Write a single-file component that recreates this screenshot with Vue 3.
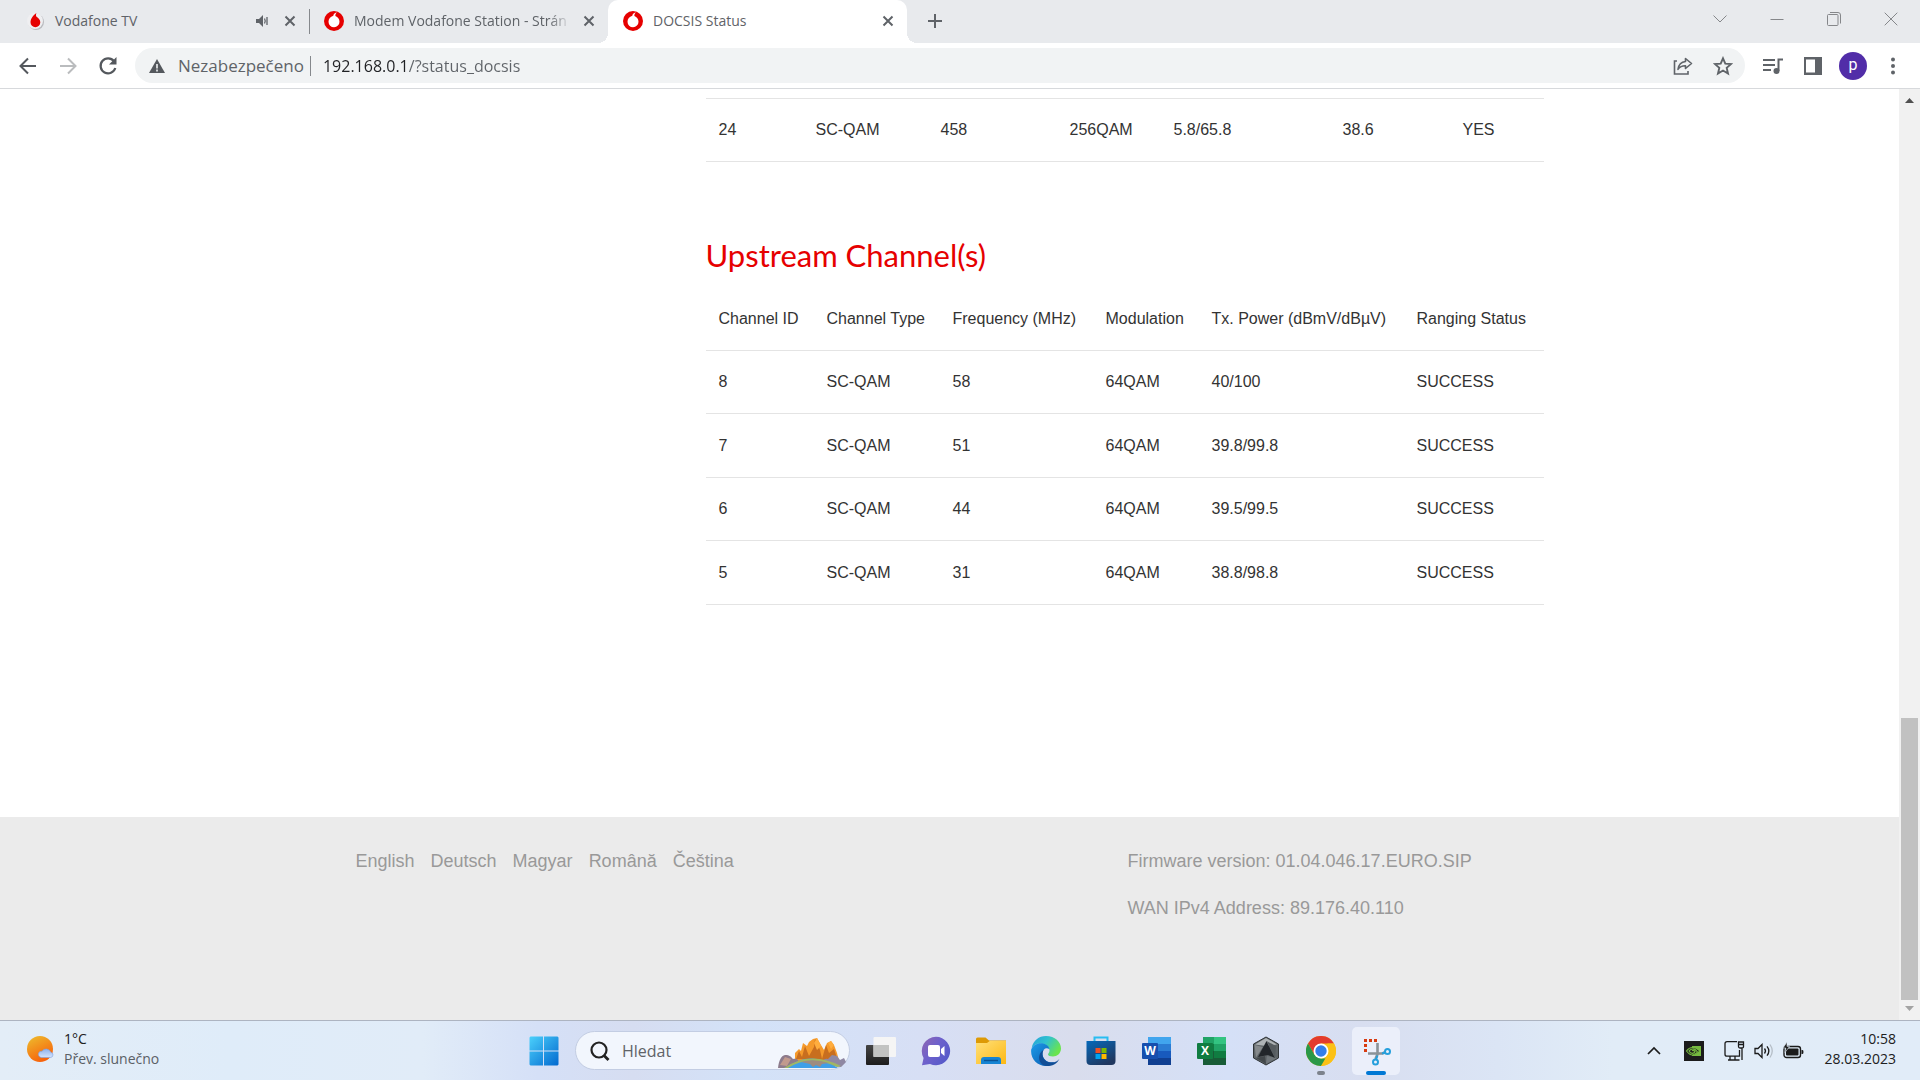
<script setup>
import { ref } from 'vue'

const url = ref('192.168.0.1/?status_docsis')
const query = ref('')

const downstream = [['24', 'SC-QAM', '458', '256QAM', '5.8/65.8', '38.6', 'YES']]
const upstreamHead = ['Channel ID', 'Channel Type', 'Frequency (MHz)', 'Modulation', 'Tx. Power (dBmV/dBµV)', 'Ranging Status']
const upstream = [
  ['8', 'SC-QAM', '58', '64QAM', '40/100', 'SUCCESS'],
  ['7', 'SC-QAM', '51', '64QAM', '39.8/99.8', 'SUCCESS'],
  ['6', 'SC-QAM', '44', '64QAM', '39.5/99.5', 'SUCCESS'],
  ['5', 'SC-QAM', '31', '64QAM', '38.8/98.8', 'SUCCESS'],
]
const languages = ['English', 'Deutsch', 'Magyar', 'Română', 'Čeština']
</script>

<template>
  <div class="screen">
    <header class="tabstrip">
      <div class="tab">
        <svg class="favicon" viewBox="0 0 20 20" aria-hidden="true">
          <circle cx="11" cy="11" r="8" fill="#b9babe" />
          <circle cx="10" cy="10" r="8" fill="#efeff1" />
          <path d="M11.500 2C8.500 4 5.500 7.500 5.500 11.300A4.900 4.900 0 0 0 15.300 11.300C15.300 8.300 12.800 6.800 11.300 5.500C10.700 4.300 11 3 11.500 2Z" fill="#e60000" />
        </svg>
        <span class="tab-title">Vodafone TV</span>
        <button class="mini" aria-label="Ztlumit kartu">
          <svg width="14" height="14" viewBox="0 0 14 14"><path d="M1 5h3l4-4v12L4 9H1z" fill="#5f6368" /><path d="M9.500 4.500q1.500 2.500 0 5M12 3v8" fill="none" stroke="#5f6368" stroke-width="1.300" /></svg>
        </button>
        <button class="mini" aria-label="Zavřít kartu">
          <svg width="12" height="12" viewBox="0 0 12 12"><path d="M1.500 1.500l9 9M10.500 1.500l-9 9" stroke="#5f6368" stroke-width="2" /></svg>
        </button>
      </div>
      <div class="tab second">
        <svg class="favicon" viewBox="0 0 20 20" aria-hidden="true">
          <circle cx="10" cy="10" r="10" fill="#e60000" />
          <path d="M13.500 1.300C10.800 1.700 9.500 3 9.300 4.800C6.300 5.700 4.500 8.200 4.500 10.800A5.500 5.500 0 0 0 15.500 10.700C15.500 7.900 13.900 6 11.400 5C11.200 3.200 12 2 13.500 1.300Z" fill="#fff" />
        </svg>
        <span class="tab-title faded">Modem Vodafone Station - Strán</span>
        <button class="mini" aria-label="Zavřít kartu">
          <svg width="12" height="12" viewBox="0 0 12 12"><path d="M1.500 1.500l9 9M10.500 1.500l-9 9" stroke="#5f6368" stroke-width="2" /></svg>
        </button>
      </div>
      <div class="tab active">
        <svg class="favicon" viewBox="0 0 20 20" aria-hidden="true">
          <circle cx="10" cy="10" r="10" fill="#e60000" />
          <path d="M13.500 1.300C10.800 1.700 9.500 3 9.300 4.800C6.300 5.700 4.500 8.200 4.500 10.800A5.500 5.500 0 0 0 15.500 10.700C15.500 7.900 13.900 6 11.400 5C11.200 3.200 12 2 13.500 1.300Z" fill="#fff" />
        </svg>
        <span class="tab-title">DOCSIS Status</span>
        <button class="mini" aria-label="Zavřít kartu">
          <svg width="12" height="12" viewBox="0 0 12 12"><path d="M1.500 1.500l9 9M10.500 1.500l-9 9" stroke="#5f6368" stroke-width="2" /></svg>
        </button>
      </div>
      <button class="newtab" aria-label="Nová karta">
        <svg width="16" height="16" viewBox="0 0 16 16"><path d="M8 1v14M1 8h14" stroke="#5f6368" stroke-width="2" /></svg>
      </button>
      <div class="window-controls">
        <button aria-label="Hledat na kartách"><svg width="14" height="14" viewBox="0 0 14 14"><path d="M.5 3.500L7 10l6.500-6.500" /></svg></button>
        <button aria-label="Minimalizovat"><svg width="14" height="14" viewBox="0 0 14 14"><path d="M.5 7.500h13" /></svg></button>
        <button aria-label="Obnovit"><svg width="14" height="14" viewBox="0 0 14 14"><rect x=".5" y="2.500" width="10.500" height="11" rx="1" /><path d="M3 .5h8q2.500 0 2.500 2.500v8.500" /></svg></button>
        <button aria-label="Zavřít"><svg width="14" height="14" viewBox="0 0 14 14"><path d="M.7 .7l12.600 12.600M13.300 .7L.7 13.300" /></svg></button>
      </div>
    </header>

    <nav class="toolbar">
      <button class="tool" aria-label="Zpět"><svg width="20" height="20" viewBox="0 0 20 20"><path d="M18 10H3M10 2.500L2.500 10l7.500 7.500" fill="none" stroke="#54585d" stroke-width="2" /></svg></button>
      <button class="tool" aria-label="Vpřed"><svg width="20" height="20" viewBox="0 0 20 20"><path d="M2 10h15M10 2.500l7.500 7.500-7.500 7.500" fill="none" stroke="#babcbe" stroke-width="2" /></svg></button>
      <button class="tool" aria-label="Obnovit stránku"><svg width="20" height="20" viewBox="0 0 20 20"><path d="M16 5.200A7.500 7.500 0 1 0 17.300 12" fill="none" stroke="#54585d" stroke-width="2.200" /><path d="M18.500 1v7.500H11z" fill="#54585d" /></svg></button>
      <div class="address">
        <svg width="16" height="16" viewBox="0 0 16 16" aria-hidden="true"><path d="M8 1l8 14H0z" fill="#54585d" /><path d="M8 6v4.500M8 11.500v2" stroke="#f1f3f4" stroke-width="1.600" /></svg>
        <label class="insecure" for="url">Nezabezpečeno</label>
        <span class="divider"></span>
        <input id="url" v-model="url" class="url" type="text" spellcheck="false" />
        <button class="tool" aria-label="Sdílet"><svg width="20" height="18" viewBox="0 0 20 18" fill="none" stroke="#5f6368" stroke-width="1.600"><path d="M4 4H1.500v13H15v-3" /><path d="M12.500 1.500l6 5-6 5V8.800C9 8.700 6.800 9.800 5 12.300C5.600 8 8 5 12.500 4.500z" stroke-linejoin="round" /></svg></button>
        <button class="tool" aria-label="Přidat do záložek"><svg width="20" height="20" viewBox="0 0 20 20"><path d="M10 2.300l2.300 5.300 5.700.5-4.300 3.800 1.300 5.600-5-3-5 3 1.300-5.600L2 8.100l5.700-.5z" fill="none" stroke="#5f6368" stroke-width="1.900" /></svg></button>
      </div>
      <button class="tool" aria-label="Média"><svg width="20" height="18" viewBox="0 0 20 18"><path d="M0 3h12M0 8h12M0 13h8" stroke="#5f6368" stroke-width="2" /><circle cx="13.500" cy="14" r="3" fill="#5f6368" /><path d="M15.500 14V2.500H20" fill="none" stroke="#5f6368" stroke-width="2" /></svg></button>
      <button class="tool" aria-label="Postranní panel"><svg width="18" height="18" viewBox="0 0 18 18"><rect width="18" height="18" fill="#5f6368" /><rect x="2" y="2.500" width="9" height="13" fill="#fff" /></svg></button>
      <button class="tool" aria-label="Profil"><span class="avatar">p</span></button>
      <button class="tool" aria-label="Nabídka"><svg width="4" height="18" viewBox="0 0 4 18" fill="#5f6368"><circle cx="2" cy="2.500" r="2" /><circle cx="2" cy="9" r="2" /><circle cx="2" cy="15.500" r="2" /></svg></button>
    </nav>

    <div class="viewport">
      <div class="page">
        <main class="content">
          <table class="downstream">
            <colgroup><col class="w97"><col class="w125"><col class="w129"><col class="w104"><col class="w169"><col class="w120"><col></colgroup>
            <tbody>
              <tr v-for="row in downstream" :key="row[0]"><td v-for="(cell, i) in row" :key="i">{{ cell }}</td></tr>
            </tbody>
          </table>
          <h2>Upstream Channel(s)</h2>
          <table>
            <colgroup><col class="w108"><col class="w126"><col class="w153"><col class="w106"><col class="w205"><col></colgroup>
            <thead>
              <tr><th v-for="name in upstreamHead" :key="name" scope="col">{{ name }}</th></tr>
            </thead>
            <tbody>
              <tr v-for="row in upstream" :key="row[0]"><td v-for="(cell, i) in row" :key="i">{{ cell }}</td></tr>
            </tbody>
          </table>
        </main>
        <footer class="footer">
          <div class="footer-inner">
            <nav class="languages"><a v-for="lang in languages" :key="lang" href="#">{{ lang }}</a></nav>
            <div class="versions">
              <p>Firmware version: 01.04.046.17.EURO.SIP</p>
              <p>WAN IPv4 Address: 89.176.40.110</p>
            </div>
          </div>
        </footer>
      </div>
      <div class="scrollbar" aria-hidden="true">
        <svg width="9" height="5" viewBox="0 0 9 5"><path d="M0 5L4.500 0 9 5z" fill="#505050" /></svg>
        <span class="above"></span>
        <span class="thumb"></span>
        <svg width="9" height="5" viewBox="0 0 9 5"><path d="M0 0h9L4.500 5z" fill="#a3a3a3" /></svg>
      </div>
    </div>

    <footer class="taskbar">
      <button class="weather">
        <svg width="28" height="28" viewBox="0 0 28 28" aria-hidden="true">
          <defs>
            <linearGradient id="sun" x1="0" y1="0" x2=".5" y2="1"><stop offset="0" stop-color="#edbf2e" /><stop offset="1" stop-color="#f7630c" /></linearGradient>
            <linearGradient id="cloud" x1="0" y1="0" x2="0" y2="1"><stop offset="0" stop-color="#8fb2ee" /><stop offset="1" stop-color="#d3e3fb" /></linearGradient>
          </defs>
          <circle cx="13" cy="13" r="13" fill="url(#sun)" />
          <path d="M14 21.500a3.200 3.200 0 0 1 0-6.300h1a5 5 0 0 1 8.800 1a2.700 2.700 0 0 1 0 5.300z" fill="url(#cloud)" stroke="#7e9fe0" stroke-width=".6" />
        </svg>
        <span class="weather-text"><span class="temp">1°C</span><span class="sky">Přev. slunečno</span></span>
      </button>

      <div class="apps">
        <button class="app" aria-label="Start">
          <svg width="30" height="30" viewBox="0 0 30 30">
            <defs><linearGradient id="win" x1="0" y1="0" x2="1" y2="1"><stop offset="0" stop-color="#4bd0fb" /><stop offset="1" stop-color="#0269cf" /></linearGradient></defs>
            <path d="M1.500 .5H14v14H.5v-13zM15 .5h13.500l1 1v13H15zM.5 15.500H14v14H1.500l-1-1zM15 15.500h14.500v13l-1 1H15z" fill="url(#win)" />
          </svg>
        </button>
        <div class="search">
          <svg class="lens" width="20" height="20" viewBox="0 0 20 20" fill="none" stroke="#222" stroke-width="2.200"><circle cx="9" cy="9" r="7.500" /><path d="M13.500 14l5 5" stroke-width="2.800" /></svg>
          <input v-model="query" type="text" placeholder="Hledat" aria-label="Hledat" />
          <svg class="scene" width="68" height="32" viewBox="0 0 68 32" aria-hidden="true">
            <path d="M17 24V16l4-4 2 2 2-8 4 3 2-4 4-3 4-1 4 7 3 5 3-7 4-2 3 4 3 8 2 8v5z" fill="#f59a2c" />
            <path d="M18 22l3-8 3 6 3-11 4 10 5-9 1-8 5 11 2 9 4-14 3 8 5-4 3 9-7 2z" fill="#b85f1b" opacity=".75" />
            <path d="M36 6l3-5 4 8-4 4zM50 6l3-2 3 4-3 4z" fill="#ffad3e" />
            <path d="M0 31c1-8 3-12 7-13 5 0 6 2 8 4 3-1 6 0 6 4L9 31z" fill="#8d7b8c" />
            <path d="M2 28l5-8 6 2-4 7z" fill="#c29a8d" />
            <path d="M44 25q2-4 6-3l4-4 5 1 3 4 4-2 2 4-5 5-10-1z" fill="#8f88a3" />
            <path d="M8 31q24-19 52 0z" fill="#3f9fe8" />
            <path d="M6 31Q32 13 63 29l-4 1Q32 17 10 31z" fill="#a0b665" />
            <path d="M23 25q12-4 28 1l-7 1-2 3-4-2-3 2-3-3z" fill="#9e8c80" />
          </svg>
        </div>
        <button class="app" aria-label="Zobrazení úloh">
          <svg width="32" height="30" viewBox="0 0 32 30">
            <defs>
              <linearGradient id="dark" x1="0" y1="0" x2="0" y2="1"><stop offset="0" stop-color="#444" /><stop offset="1" stop-color="#1d1d1d" /></linearGradient>
            </defs>
            <rect x="1" y="9" width="23" height="20" rx="1" fill="url(#dark)" />
            <rect x="8.500" y="1" width="22.500" height="20" rx="1" fill="#f5f5f5" />
            <path d="M8.500 9H24v12H8.500z" fill="#c2c3c2" />
          </svg>
        </button>
        <button class="app" aria-label="Chat">
          <svg width="30" height="30" viewBox="0 0 30 30">
            <defs><linearGradient id="chat" x1="0" y1="0" x2="1" y2=".7"><stop offset="0" stop-color="#9166b1" /><stop offset=".5" stop-color="#6d61cc" /><stop offset="1" stop-color="#5559c9" /></linearGradient></defs>
            <path d="M15 .8a14.200 14.200 0 1 1-6 27.100L1 29.200 2.600 22A14.200 14.200 0 0 1 15 .8z" fill="url(#chat)" />
            <rect x="7" y="9" width="12" height="12" rx="2" fill="#fff" /><path d="M20 13l3.500-3v10L20 17z" fill="#fff" />
          </svg>
        </button>
        <button class="app" aria-label="Průzkumník souborů">
          <svg width="30" height="30" viewBox="0 0 30 30">
            <defs><linearGradient id="folder" x1="0" y1="0" x2="1" y2="1"><stop offset="0" stop-color="#ffe07a" /><stop offset="1" stop-color="#fdb813" /></linearGradient></defs>
            <path d="M0 3q0-1.500 1.500-1.500h8L13 4.500h17V14H0z" fill="#dd9a05" />
            <path d="M0 7h11l3-2.200h16V28H0z" fill="url(#folder)" />
            <path d="M5 28v-4q0-3 3-3h14q3 0 3 3v4z" fill="#1684d3" /><path d="M8 24.500h14" stroke="#0a5394" stroke-width="1.400" />
          </svg>
        </button>
        <button class="app" aria-label="Edge">
          <svg width="30" height="30" viewBox="0 0 30 30">
            <defs>
              <linearGradient id="edge-top" x1="0" y1="0" x2="1" y2=".5"><stop offset="0" stop-color="#249fdb" /><stop offset=".5" stop-color="#30c2cf" /><stop offset="1" stop-color="#6ae44f" /></linearGradient>
              <linearGradient id="edge-low" x1="0" y1="0" x2="1" y2="1"><stop offset="0" stop-color="#1b9ce8" /><stop offset="1" stop-color="#0a56ae" /></linearGradient>
            </defs>
            <path d="M.7 12C2 4.500 8 0 15 0c9 0 15 6 15 12.500 0 5-4 8-8 8-3 0-5-1-5-2s1.500-1.500 1.500-4c0-4-4-7-9-7-4 0-7 2-8.800 4.500z" fill="url(#edge-top)" />
            <path d="M.2 13.500C2 9.500 5.500 7.300 9.500 7.300c5 0 8.500 2.500 9 6-3-2.500-7-.5-7 4.200 0 6 5.500 10 12 8.500C21 28.500 18 30 15 30 6 30-.8 22.500.2 13.500z" fill="url(#edge-low)" />
            <path d="M12.500 14c-3 6 1 13 8.500 12.500 3 0 6-1.500 7.500-3.800C26 28 21 30 16 30 7 29.500 5.500 18 12.500 14z" fill="#124e96" />
          </svg>
        </button>
        <button class="app" aria-label="Microsoft Store">
          <svg width="30" height="30" viewBox="0 0 30 30">
            <defs><linearGradient id="store" x1="0" y1="0" x2=".6" y2="1"><stop offset="0" stop-color="#0669ba" /><stop offset="1" stop-color="#20375f" /></linearGradient></defs>
            <path d="M8.500 6V1.500h13V6" fill="none" stroke="#28bdf2" stroke-width="2" />
            <path d="M.5 5h29v20q0 4-4 4h-21q-4 0-4-4z" fill="url(#store)" />
            <path d="M9.500 12h5v5h-5z" fill="#f25022" /><path d="M15.500 12h5v5h-5z" fill="#7fba00" /><path d="M9.500 18h5v5h-5z" fill="#00a4ef" /><path d="M15.500 18h5v5h-5z" fill="#ffb900" />
          </svg>
        </button>
        <button class="app office" aria-label="Word">
          <svg width="30" height="30" viewBox="0 0 30 30"><path d="M7 1h23v7H7z" fill="#41a5ee" /><path d="M7 8h23v7H7z" fill="#2b7cd3" /><path d="M7 15h23v7H7z" fill="#185abd" /><path d="M7 22h23v7H7z" fill="#103f91" /><rect x="1" y="7" width="16" height="16" rx="1" fill="#164fae" /></svg>
          <span>W</span>
        </button>
        <button class="app office" aria-label="Excel">
          <svg width="30" height="30" viewBox="0 0 30 30"><path d="M7 1h12v7H7z" fill="#21a366" /><path d="M18 1h12v7H18z" fill="#33c481" /><path d="M7 8h12v7H7z" fill="#107c41" /><path d="M18 8h12v7H18z" fill="#21a366" /><path d="M7 15h12v7H7z" fill="#185c37" /><path d="M18 15h12v7H18z" fill="#107c41" /><path d="M7 22h23v7H7z" fill="#185c37" /><rect x="1" y="7" width="16" height="16" rx="1" fill="#107c41" /></svg>
          <span>X</span>
        </button>
        <button class="app" aria-label="Armoury Crate">
          <svg width="30" height="30" viewBox="0 0 30 30">
            <path d="M15 1l12.500 7v14L15 29 2.500 22V8z" fill="#5e6467" stroke="#303538" />
            <path d="M15 2L26 8.500 15 10 4 8.500z" fill="#aeb3b5" /><path d="M3.500 9L12 11 5 21.500z" fill="#85898b" /><path d="M5 22l9-2 1 8z" fill="#42474a" /><path d="M15 28l1-8 10 2z" fill="#70767a" />
            <path d="M15.500 5L7 21l10-2 7 3z" fill="#22262a" /><path d="M15.500 5L25 10l-1 12z" fill="#555b5f" />
          </svg>
        </button>
        <button class="app running" aria-label="Chrome">
          <svg width="30" height="30" viewBox="0 0 30 30">
            <circle cx="15" cy="15" r="15" fill="#fbc116" />
            <path d="M2 7.500A15 15 0 0 1 28 7.500H15L8.500 18.800z" fill="#e33b2e" />
            <path d="M2 7.500L8.500 18.800 15 22.500h6L15 30A15 15 0 0 1 2 7.500z" fill="#2a9848" />
            <path d="M15 30l6.500-11.200V7.500H28A15 15 0 0 1 15 30z" fill="#fbc116" />
            <circle cx="15" cy="15" r="7.500" fill="#fff" /><circle cx="15" cy="15" r="5.700" fill="#347eea" />
          </svg>
        </button>
        <button class="app current" aria-label="Výstřižky">
          <svg width="30" height="30" viewBox="0 0 30 30" fill="none">
            <path d="M14.500 8V4.500h-10v10H8" stroke="#d83b10" stroke-width="3" stroke-dasharray="3 2" stroke-dashoffset="3" />
            <path d="M3 3h3v3H3zM8 3h3v3H8zM13 3h3v3h-3z" fill="#d83b10" />
            <path d="M16.500 7v11L14.500 23" stroke="#8b9298" stroke-width="2.600" /><path d="M7 17.500h14.500l3-1.500" stroke="#8b9298" stroke-width="2.600" />
            <path d="M16.500 19.500l-1.500 4M21 17.500l3-1" stroke="#259fdc" stroke-width="2" />
            <circle cx="14.500" cy="26" r="2.500" stroke="#259fdc" stroke-width="2" /><circle cx="26.500" cy="15.500" r="2.500" stroke="#259fdc" stroke-width="2" />
          </svg>
        </button>
      </div>

      <div class="tray">
        <button class="tray-item" aria-label="Skryté ikony"><svg width="14" height="9" viewBox="0 0 14 9"><path d="M1 8l6-6 6 6" fill="none" stroke="#1c1c1c" stroke-width="1.700" /></svg></button>
        <button class="tray-item nvidia" aria-label="NVIDIA"><svg width="20" height="20" viewBox="0 0 20 20"><path d="M0 0h20v20H0z" fill="#1b1b1b" /><path d="M8 5h9v10H8z" fill="#76b93f" /><path d="M8 7q4 0 7 3-4 4-7 4-4-1-6-4 3-3 6-3z" fill="#1b1b1b" /><path d="M8.500 6.500Q5 6.500 2.500 10q3 4 6 4 3-.5 5-3Q11 7.500 8.500 8 6 8.500 5 10q1.500 2.500 3.500 2.300Q10.500 12 11 10.500 9.500 9 8 9.700" fill="none" stroke="#76b93f" stroke-width="1.200" /></svg></button>
        <button class="tray-item net" aria-label="Síť, hlasitost a baterie">
          <svg width="21" height="20" viewBox="0 0 21 20" fill="none" stroke="#1b1b1b" stroke-width="1.300"><path d="M13 .7H3Q1 .7 1 2.700v10.500q0 2 2 2h12.500V9M6 15.500v3.500M11 15.500v3.500M4 19h11.500" /><path d="M14.500 1h5v4.500q0 1.500-1.500 1.500h-2q-1.500 0-1.500-1.500zM14.500 3.500h5M18 7v12" /></svg>
          <svg width="20" height="16" viewBox="0 0 20 16" fill="none" stroke="#1b1b1b" stroke-width="1.300"><path d="M1 5.500h3L8 1.500v13L4 10.500H1z" /><path d="M10.500 5.500q2 2.500 0 5M13 3.300q3.700 4.700 0 9.400" /><path d="M16 1.500q4.500 6.500 0 13" stroke="#b5bec7" /></svg>
          <svg width="21" height="17" viewBox="0 0 21 17"><rect x="1" y="4.500" width="16.500" height="11" rx="2.500" fill="#e1ecf7" stroke="#1b1b1b" stroke-width="1.400" /><rect x="3" y="6.500" width="12.500" height="7" rx="1" fill="#1b1b1b" /><path d="M18.500 8h1q1 0 1 2t-1 2h-1z" fill="#1b1b1b" /><path d="M4 0L0 6h2.800L2 10.500 6.500 4.500H4z" fill="#1b1b1b" stroke="#e1ecf7" stroke-width=".6" /></svg>
        </button>
        <button class="clock"><span>10:58</span><span>28.03.2023</span></button>
      </div>
    </footer>
  </div>
</template>

<style>
body {
  margin: 0;
}
</style>

<style scoped>
.screen {
  display: flex;
  flex-direction: column;
  min-height: 100vh;
  background: #fff;
  color: #333;
  font-family: "Open Sans", "Noto Sans", sans-serif;
}
button {
  display: flex;
  align-items: center;
  justify-content: center;
  padding: 0;
  border: 0;
  background: none;
  color: inherit;
  font: inherit;
}
input {
  min-width: 0;
  padding: 0;
  border: 0;
  outline: 0;
  background: none;
  font: inherit;
}
svg {
  flex: none;
}

/* Browser tabs */
.tabstrip {
  display: flex;
  height: 43px;
  padding: 0 0 0 10px;
  background: #e8eaed;
  color: #5f6368;
}
.tab {
  position: relative;
  box-sizing: border-box;
  display: flex;
  align-items: center;
  gap: 8px;
  width: 299px;
  padding: 0 9px 1px 15px;
  font-size: 14px;
}
.favicon {
  width: 20px;
  height: 20px;
}
.tab-title {
  flex: 1;
  margin-left: 2px;
  padding-bottom: 1px;
  white-space: nowrap;
}
.faded {
  mask-image: linear-gradient(90deg, #000 90%, transparent);
}
.mini {
  width: 20px;
  height: 20px;
}
.second::before {
  content: "";
  position: absolute;
  left: 0;
  top: 9px;
  width: 1px;
  height: 25px;
  background: #85888c;
}
.active {
  border-radius: 10px 10px 0 0;
  background: #fff;
}
.active::before,
.active::after {
  content: "";
  position: absolute;
  bottom: 0;
  width: 10px;
  height: 10px;
}
.active::before {
  right: 100%;
  background: radial-gradient(circle at 0 0, transparent 10px, #fff 10px);
}
.active::after {
  left: 100%;
  background: radial-gradient(circle at 100% 0, transparent 10px, #fff 10px);
}
.newtab {
  width: 56px;
  padding-bottom: 1px;
}
.window-controls {
  display: flex;
  margin-left: auto;
  padding-right: 1px;
}
.window-controls button {
  width: 57px;
  height: 37px;
}
.window-controls svg {
  fill: none;
  stroke: #85878a;
}

/* Toolbar */
.toolbar {
  display: flex;
  align-items: center;
  height: 45px;
  padding: 0 7px 0 8px;
  border-bottom: 1px solid #d7d9dc;
}
.tool {
  width: 40px;
  height: 35px;
}
.address {
  flex: 1;
  display: flex;
  align-items: center;
  height: 35px;
  margin: 0 8px 0 7px;
  padding: 0 2px 0 14px;
  border-radius: 18px;
  background: #f1f3f4;
  color: #5f6368;
  font-size: 17px;
}
.insecure {
  margin-left: 13px;
}
.divider {
  width: 1px;
  height: 20px;
  margin: 0 12px 0 6px;
  background: #85888c;
}
.url {
  flex: 1;
  height: 28px;
  background: linear-gradient(90deg, #202124 83px, #5f6368 83px);
  background-clip: text;
  color: transparent;
  caret-color: #202124;
  font-size: 16px;
}
.avatar {
  width: 28px;
  height: 28px;
  border-radius: 50%;
  background: #512da8;
  color: #fff;
  font: 16px/26px Roboto, sans-serif;
}

/* Modem page */
.viewport {
  flex: 1;
  display: flex;
  font-family: "Liberation Sans", Arial, sans-serif;
}
.page {
  flex: 1;
  display: flex;
  flex-direction: column;
}
.content,
.footer-inner {
  box-sizing: border-box;
  width: 100%;
  max-width: 1188px;
  margin: 0 auto;
}
.content {
  flex: 1;
  padding: 9px 0 80px 350px;
}
table {
  width: 100%;
  table-layout: fixed;
  border-spacing: 0;
  font-size: 16px;
}
th,
td {
  box-sizing: border-box;
  height: 63px;
  padding: 0 0 0 13px;
  border-bottom: 1px solid #e4e4e4;
  font-weight: 400;
  text-align: left;
  white-space: nowrap;
}
tbody tr:nth-child(even) td {
  height: 64px;
}
.downstream {
  border-top: 1px solid #e4e4e4;
}
.w97 { width: 97px; }
.w104 { width: 104px; }
.w106 { width: 106px; }
.w108 { width: 108px; }
.w120 { width: 120px; }
.w125 { width: 125px; }
.w126 { width: 126px; }
.w129 { width: 129px; }
.w153 { width: 153px; }
.w169 { width: 169px; }
.w205 { width: 205px; }
h2 {
  margin: 73px 0 13px;
  color: #e60000;
  font: 400 31px/40px Lato, sans-serif;
}
.footer {
  padding: 32px 0 100px;
  background: #ebebeb;
  color: #999;
  font-size: 18px;
  line-height: 24px;
}
.footer-inner {
  display: grid;
  grid-template-columns: 772px 1fr;
}
.languages {
  display: flex;
  gap: 16px;
}
.languages a {
  color: inherit;
  text-decoration: none;
}
.versions {
  display: grid;
  gap: 23px;
}
.versions p {
  margin: 0;
}
.scrollbar {
  box-sizing: border-box;
  display: flex;
  flex-direction: column;
  align-items: center;
  width: 21px;
  padding: 9px 0;
  background: #f1f1f1;
}
.above {
  flex: 616;
}
.thumb {
  flex: 282;
  width: 17px;
  margin-bottom: 6px;
  background: #c1c1c1;
}

/* Taskbar */
.taskbar {
  display: grid;
  grid-template-columns: 1fr auto 1fr;
  align-items: center;
  height: 59px;
  border-top: 1px solid #adb4c1;
  background: linear-gradient(90deg, #e3edf7 0%, #dfecf9 12%, #e1ecf8 22%, #d5e0f7 28%, #d6ddf1 33%, #d3e2f8 39%, #d7dff5 48%, #d9dded 56%, #d5e0f7 64%, #d8def0 71%, #dbe5f5 78%, #e1ecf7 84%, #e1ecf8 100%);
}
.weather {
  justify-self: start;
  gap: 9px;
  padding: 0 12px 2px 27px;
  font-size: 14px;
  line-height: 20px;
}
.weather-text {
  display: grid;
  padding-bottom: 2px;
  text-align: left;
}
.temp {
  color: #202020;
}
.sky {
  color: #5b6066;
}
.apps {
  display: flex;
  align-items: center;
  gap: 7px;
}
.app {
  position: relative;
  width: 48px;
  height: 48px;
  border-radius: 5px;
}
.office span {
  position: absolute;
  left: 10px;
  top: 16px;
  width: 16px;
  color: #fff;
  font: 700 12px/16px "Open Sans", sans-serif;
  text-align: center;
}
.running::after,
.current::after {
  content: "";
  position: absolute;
  bottom: 0;
  left: 50%;
  width: 8px;
  height: 4px;
  border-radius: 2px;
  background: #7c828c;
  transform: translateX(-50%);
}
.current {
  background: #ebeffa;
}
.current::after {
  width: 20px;
  background: #0078d4;
}
.search {
  box-sizing: border-box;
  display: flex;
  align-items: center;
  width: 275px;
  height: 39px;
  padding: 0 3px 0 14px;
  border: 1px solid #c3cde3;
  border-radius: 20px;
  background: #f2f6fd;
}
.search input {
  flex: 1;
  margin-left: 12px;
  font-size: 16px;
}
.search input::placeholder {
  color: #606368;
}
.scene {
  align-self: flex-end;
}
.tray {
  justify-self: end;
  display: flex;
  align-items: center;
  padding-right: 24px;
}
.tray-item {
  width: 30px;
  height: 40px;
}
.nvidia {
  margin: 0 15px 0 10px;
}
.net {
  gap: 9px;
  width: auto;
}
.clock {
  display: grid;
  justify-items: end;
  margin-left: 21px;
  padding-bottom: 3px;
  color: #202020;
  font-size: 14px;
  line-height: 20px;
}
</style>
